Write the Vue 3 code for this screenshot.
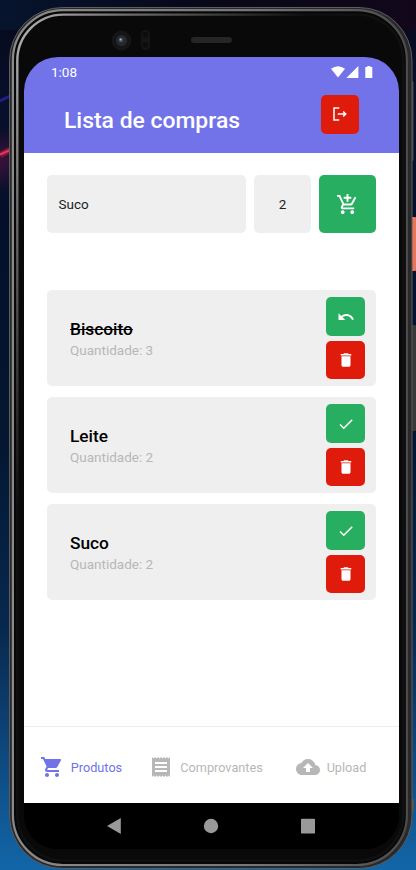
<script setup>
import { ref } from 'vue'

const icons = {
  logout: 'M17 8l-1.41 1.41L17.17 11H9v2h8.17l-1.58 1.58L17 16l4-4-4-4zM5 5h6V3H3v18h8v-2H5V5z',
  addCart: 'M11 9h2V6h3V4h-3V1h-2v3H8v2h3v3zm-4 9c-1.1 0-1.99.9-1.99 2S5.9 22 7 22s2-.9 2-2-.9-2-2-2zm10 0c-1.1 0-1.99.9-1.99 2s.89 2 1.99 2 2-.9 2-2-.9-2-2-2zm-9.83-3.25l.03-.12.9-1.63h7.45c.75 0 1.41-.41 1.75-1.03l3.86-7.01L19.42 4h-.01l-1.1 2-2.76 5H8.53l-.13-.27L6.16 6l-.95-2-.94-2H1v2h2l3.6 7.59-1.35 2.45c-.16.28-.25.61-.25.96 0 1.1.9 2 2 2h12v-2H7.42c-.13 0-.25-.11-.25-.25z',
  undo: 'M12.5 8c-2.65 0-5.05.99-6.9 2.6L2 7v9h9l-3.62-3.62c1.39-1.16 3.16-1.88 5.12-1.88 3.54 0 6.55 2.31 7.6 5.5l2.37-.78C21.08 11.03 17.15 8 12.5 8z',
  check: 'M9 16.17L4.83 12l-1.42 1.41L9 19 21 7l-1.41-1.41z',
  trash: 'M6 19c0 1.1.9 2 2 2h8c1.1 0 2-.9 2-2V7H6v12zM19 4h-3.5l-1-1h-5l-1 1H5v2h14V4z',
  cart: 'M7 18c-1.1 0-1.99.9-1.99 2S5.9 22 7 22s2-.9 2-2-.9-2-2-2zM1 2v2h2l3.6 7.59-1.35 2.45c-.16.28-.25.61-.25.96 0 1.1.9 2 2 2h12v-2H7.42c-.14 0-.25-.11-.25-.25l.03-.12.9-1.63h7.45c.75 0 1.41-.41 1.75-1.03l3.58-6.49c.08-.14.12-.31.12-.48 0-.55-.45-1-1-1H5.21l-.94-2H1zm16 16c-1.1 0-1.99.9-1.99 2s.89 2 1.99 2 2-.9 2-2-.9-2-2-2z',
  receipt: 'M18 17H6v-2h12v2zm0-4H6v-2h12v2zm0-4H6V7h12v2zM3 22l1.5-1.5L6 22l1.5-1.5L9 22l1.5-1.5L12 22l1.5-1.5L15 22l1.5-1.5L18 22l1.5-1.5L21 22V2l-1.5 1.5L18 2l-1.5 1.5L15 2l-1.5 1.5L12 2l-1.5 1.5L9 2 7.5 3.5 6 2 4.5 3.5 3 2v20z',
  upload: 'M19.35 10.04C18.67 6.59 15.64 4 12 4 9.11 4 6.6 5.64 5.35 8.04 2.34 8.36 0 10.91 0 14c0 3.31 2.69 6 6 6h13c2.76 0 5-2.24 5-5 0-2.64-2.05-4.78-4.65-4.96zM14 13v4h-4v-4H7l5-5 5 5h-3z',
}

const products = ref([
  { name: 'Biscoito', qty: 3, done: true },
  { name: 'Leite', qty: 2, done: false },
  { name: 'Suco', qty: 2, done: false },
])

const tabs = [
  { label: 'Produtos', icon: 'cart', active: true },
  { label: 'Comprovantes', icon: 'receipt', active: false },
  { label: 'Upload', icon: 'upload', active: false },
]
</script>

<template>
  <div class="desktop">
    <svg class="device" viewBox="0 0 416 870" aria-hidden="true">
      <defs>
        <linearGradient id="sky" x1="0" y1="0" x2="0" y2="1">
          <stop offset="0" stop-color="#070a1c" />
          <stop offset="0.12" stop-color="#080f2a" />
          <stop offset="0.25" stop-color="#04102b" />
          <stop offset="0.5" stop-color="#041630" />
          <stop offset="0.72" stop-color="#07284e" />
          <stop offset="0.84" stop-color="#0d4275" />
          <stop offset="1" stop-color="#1266a8" />
        </linearGradient>
        <linearGradient id="skyTop" x1="0" y1="0" x2="1" y2="0">
          <stop offset="0" stop-color="#06142d" />
          <stop offset="0.5" stop-color="#080818" />
          <stop offset="1" stop-color="#12071a" />
        </linearGradient>
        <linearGradient id="rim" x1="0" y1="0" x2="1" y2="0">
          <stop offset="0" stop-color="#8a8a8b" />
          <stop offset="0.6" stop-color="#777778" />
          <stop offset="1" stop-color="#4c4c4d" />
        </linearGradient>
        <linearGradient id="inner" x1="0" y1="0" x2="0.35" y2="0.45">
          <stop offset="0" stop-color="#b5b5b5" />
          <stop offset="0.35" stop-color="#666" />
          <stop offset="0.8" stop-color="#101012" />
        </linearGradient>
        <radialGradient id="glow" cx="0" cy="160" r="34" gradientUnits="userSpaceOnUse">
          <stop offset="0" stop-color="#3a1238" />
          <stop offset="1" stop-color="#3a1238" stop-opacity="0" />
        </radialGradient>
      </defs>
      <rect width="416" height="870" fill="url(#sky)" />
      <rect width="416" height="30" fill="url(#skyTop)" />
      <rect y="120" width="10" height="80" fill="url(#glow)" />
      <path d="M0 101L10 96" stroke="#1f1f8a" stroke-width="3" />
      <path d="M0 155L10 150" stroke="#7a1842" stroke-width="6" />
      <path d="M0 154.500L10 150" stroke="#f0344f" stroke-width="2" />
      <rect x="410" y="81" width="3.500" height="80" rx="1.500" fill="#47484b" />
      <rect x="411" y="217" width="5" height="54" rx="1" fill="#e8745c" />
      <rect x="411" y="325" width="5" height="106" rx="1" fill="#383836" />
      <rect x="410" y="799" width="4" height="12" fill="#58554f" />
      <rect x="9.500" y="7.500" width="402.500" height="861" rx="53" fill="#29292b" stroke="#5b5d5e" />
      <rect x="12.900" y="10.200" width="394" height="854.800" rx="50" fill="#070708" stroke="url(#rim)" stroke-width="2.200" />
      <rect x="17.300" y="14.600" width="386" height="846" rx="46" fill="#09090a" stroke="url(#inner)" stroke-width="2.400" />
      <circle cx="121.500" cy="40.500" r="10" fill="#151516" />
      <circle cx="121.500" cy="40.500" r="5.500" fill="#28292d" />
      <circle cx="121" cy="40" r="2.300" fill="#465065" />
      <circle cx="120.500" cy="39.500" r="0.900" fill="#b5bed0" />
      <rect x="141" y="30" width="9" height="20" rx="4.500" fill="#151516" />
      <circle cx="145.500" cy="34.500" r="2.700" fill="#0c0c0d" />
      <circle cx="145.500" cy="45" r="2.700" fill="#0c0c0d" />
      <rect x="191" y="37" width="41" height="6" rx="3" fill="#262627" />
    </svg>

    <div class="screen">
      <header class="header">
        <div class="status">
          <span>1:08</span>
          <svg class="signals" viewBox="0 0 42 12">
            <path d="M0 2.700Q7-2.300 14 2.700L7 11.600Z" />
            <path d="M15.400 12L27.400 0V12Z" />
            <path d="M34.300 1h2v-1h3v1h2v11h-7Z" />
          </svg>
        </div>
        <div class="title-row">
          <h1>Lista de compras</h1>
          <button class="btn red"><svg viewBox="0 0 24 24"><path :d="icons.logout" /></svg></button>
        </div>
      </header>

      <main class="content">
        <div class="form">
          <div class="field name">Suco</div>
          <div class="field amount">2</div>
          <button class="btn green add"><svg viewBox="0 0 24 24"><path :d="icons.addCart" /></svg></button>
        </div>

        <ul class="list">
          <li v-for="p in products" :key="p.name" class="card">
            <div class="info">
              <strong :class="{ done: p.done }">{{ p.name }}</strong>
              <span>Quantidade: {{ p.qty }}</span>
            </div>
            <div class="actions">
              <button class="btn green" @click="p.done = !p.done">
                <svg viewBox="0 0 24 24"><path :d="p.done ? icons.undo : icons.check" /></svg>
              </button>
              <button class="btn red"><svg viewBox="0 0 24 24"><path :d="icons.trash" /></svg></button>
            </div>
          </li>
        </ul>
      </main>

      <nav class="tabs">
        <a v-for="t in tabs" :key="t.label" class="tab" :class="{ active: t.active }">
          <svg viewBox="0 0 24 24"><path :d="icons[t.icon]" /></svg>
          <span>{{ t.label }}</span>
        </a>
      </nav>

      <div class="system">
        <svg viewBox="0 0 16 16"><path d="M1 8L14.800 0V16Z" /></svg>
        <svg viewBox="0 0 16 16"><circle cx="8" cy="8" r="7.200" /></svg>
        <svg viewBox="0 0 16 16"><rect x="1" y="0.800" width="14" height="14.800" rx="0.800" /></svg>
      </div>
    </div>
  </div>
</template>

<style>
body {
  margin: 0;
  background: #06122a;
}
</style>

<style scoped>
.desktop {
  position: relative;
  box-sizing: border-box;
  width: 416px;
  height: 870px;
  padding: 57px 17px 21px 24px;
  overflow: hidden;
  font-family: Roboto, "Liberation Sans", sans-serif;
}
.device {
  position: absolute;
  inset: 0;
  width: 416px;
  height: 870px;
}
.screen {
  position: relative;
  display: flex;
  flex-direction: column;
  height: 792px;
  overflow: hidden;
  border-radius: 34px;
  background: #000;
}
.header {
  box-sizing: border-box;
  height: 95.600px;
  background: #7273e8;
  color: #fff;
}
.status {
  display: flex;
  align-items: center;
  justify-content: space-between;
  height: 30px;
  padding: 0 26px 0 27px;
  font-size: 13.500px;
}
.signals {
  width: 42px;
  height: 12px;
  fill: #fff;
}
.title-row {
  display: flex;
  justify-content: space-between;
  padding: 8px 40px 0;
}
h1 {
  margin: 11px 0 0;
  font-size: 22.900px;
  line-height: 30px;
  font-weight: 500;
}
.btn {
  display: flex;
  align-items: center;
  justify-content: center;
  width: 38.500px;
  height: 38.500px;
  padding: 0;
  border: 0;
  border-radius: 5px;
}
.btn svg {
  width: 18px;
  height: 18px;
  fill: #fff;
}
.red {
  background: #df1b0c;
}
.green {
  background: #27ae60;
}
.content {
  flex: 1;
  padding: 22.800px 23px 0;
  background: #fff;
}
.form {
  display: flex;
  gap: 8px;
  height: 57.600px;
}
.field {
  display: flex;
  align-items: center;
  border-radius: 5px;
  background: #efefef;
  color: #1d1d1d;
  font-size: 13.500px;
}
.name {
  flex: 1;
  padding-left: 11.500px;
}
.amount {
  justify-content: center;
  width: 57px;
}
.add {
  width: 57px;
  height: 57.600px;
}
.add svg {
  width: 23px;
  height: 23px;
}
.list {
  display: flex;
  flex-direction: column;
  gap: 11.400px;
  margin: 57px 0 0;
  padding: 0;
  list-style: none;
}
.card {
  box-sizing: border-box;
  display: flex;
  align-items: center;
  justify-content: space-between;
  height: 95.600px;
  padding: 0 11.200px 0 23px;
  border-radius: 5px;
  background: #efefef;
}
.info {
  display: flex;
  flex-direction: column;
  padding-top: 2px;
}
.info strong {
  color: #000;
  font-size: 17.300px;
  line-height: 22px;
  font-weight: 500;
}
.info .done {
  text-decoration: line-through;
}
.info span {
  color: #b7b7b7;
  font-size: 13.500px;
  line-height: 20px;
}
.actions {
  display: flex;
  flex-direction: column;
  gap: 4.600px;
  padding-top: 1px;
}
.tabs {
  display: flex;
  box-sizing: border-box;
  height: 77px;
  border-top: 1px solid #ececec;
  background: #fff;
}
.tab {
  flex: 1 0 0;
  display: flex;
  align-items: center;
  justify-content: center;
  gap: 7px;
  min-width: 0;
  padding: 4px 11px 0 0;
  color: #b7b7b7;
  font-size: 12.700px;
  white-space: nowrap;
}
.tab svg {
  flex: none;
  width: 24px;
  height: 24px;
  fill: currentColor;
}
.active {
  color: #7273e8;
}
.system {
  display: flex;
  align-items: center;
  justify-content: center;
  gap: 81px;
  height: 46px;
  padding-right: 1px;
  background: #000;
}
.system svg {
  width: 16px;
  height: 16px;
  fill: #999;
}
</style>
